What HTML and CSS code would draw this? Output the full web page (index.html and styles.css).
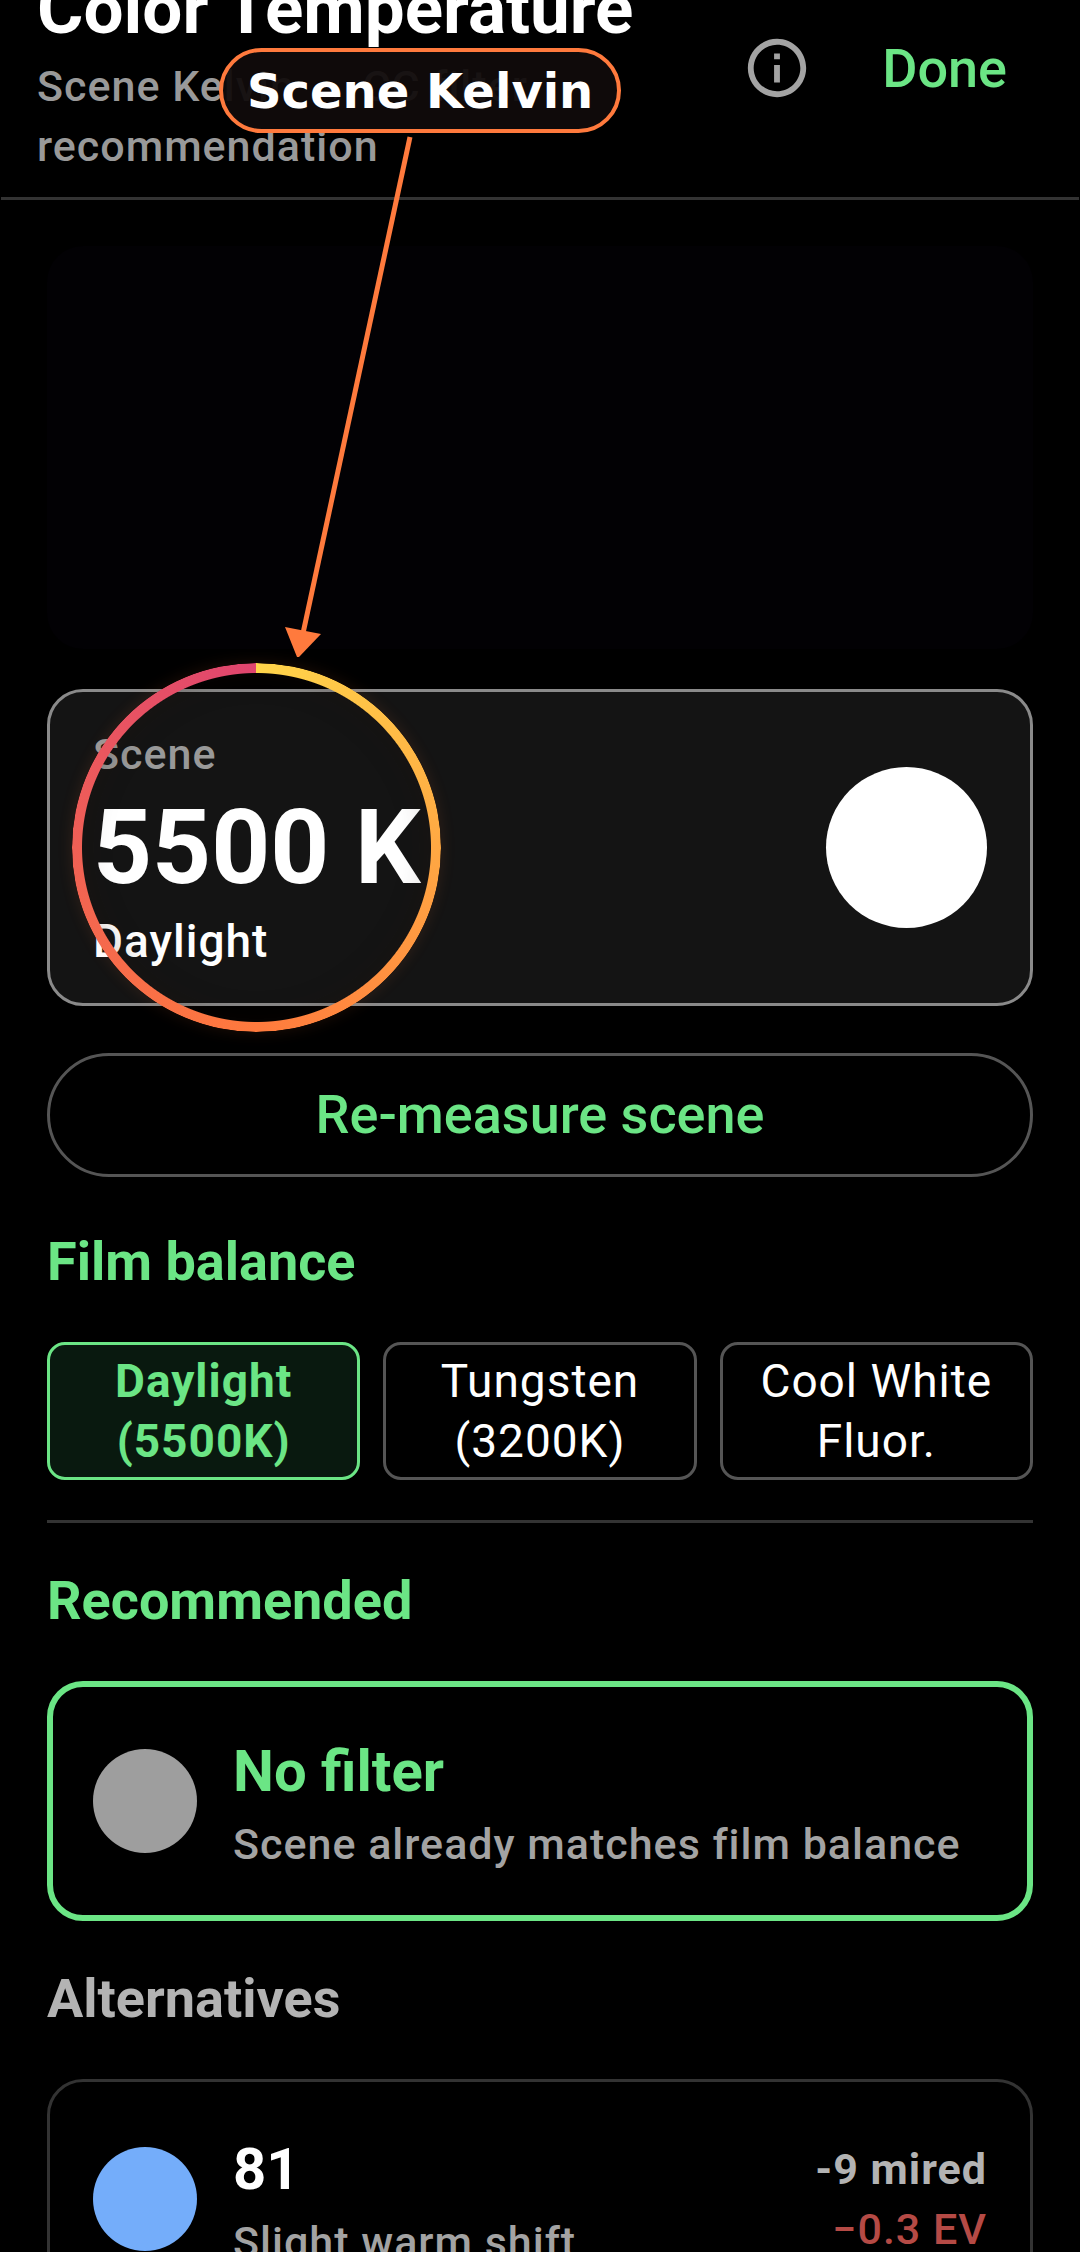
FILE: index.html
```html
<!DOCTYPE html>
<html lang="en">
<head>
<meta charset="utf-8">
<meta name="viewport" content="width=device-width, initial-scale=1">
<title>Color Temperature</title>
<link rel="stylesheet" href="styles.css">
</head>
<body>
<div class="app">
  <header class="topbar">
    <div class="topbar-text">
      <h1 class="topbar-title">Color Temperature</h1>
      <p class="topbar-sub">Scene Kelvin → CC filter recommendation</p>
    </div>
    <div class="topbar-actions">
      <button class="icon-button" type="button" aria-label="About color temperature">
        <svg class="icon" viewBox="0 0 24 24" aria-hidden="true"><path fill="currentColor" d="M11 7h2v2h-2zm0 4h2v6h-2zm1-9C6.480 2 2 6.480 2 12s4.480 10 10 10 10-4.480 10-10S17.520 2 12 2zm0 18c-4.410 0-8-3.590-8-8s3.590-8 8-8 8 3.590 8 8-3.590 8-8 8z"/></svg>
      </button>
      <button class="done" type="button">Done</button>
    </div>
  </header>

  <main class="content">
    <div class="preview"></div>

    <section class="scene">
      <div class="scene-text">
        <p class="scene-label">Scene</p>
        <p class="scene-value">5500 K</p>
        <p class="scene-name">Daylight</p>
      </div>
      <span class="swatch swatch-large"></span>
    </section>

    <button class="measure" type="button">Re-measure scene</button>

    <h2 class="heading">Film balance</h2>
    <div class="chips">
      <button class="chip chip-selected" type="button" aria-pressed="true">Daylight (5500K)</button>
      <button class="chip" type="button" aria-pressed="false">Tungsten (3200K)</button>
      <button class="chip" type="button" aria-pressed="false">Cool White Fluor.</button>
    </div>

    <hr class="divider">

    <h2 class="heading">Recommended</h2>
    <article class="filter filter-recommended">
      <span class="swatch swatch-neutral"></span>
      <div class="filter-text">
        <h3 class="filter-name">No filter</h3>
        <p class="filter-note">Scene already matches film balance</p>
      </div>
    </article>

    <h2 class="heading heading-muted">Alternatives</h2>
    <article class="filter">
      <span class="swatch swatch-blue"></span>
      <div class="filter-text">
        <h3 class="filter-name">81</h3>
        <p class="filter-note">Slight warm shift</p>
      </div>
      <div class="filter-shift">
        <p class="mired">-9 mired</p>
        <p class="ev">−0.3 EV</p>
      </div>
    </article>
  </main>

  <div class="callout">Scene Kelvin</div>
  <svg class="arrow" viewBox="0 0 140 530" aria-hidden="true">
    <path d="M130 7 L22 508" stroke="#ff7a3d" stroke-width="5" fill="none"/>
    <path d="M5 497 L41 504 L19 527 L17 527 Z" fill="#ff7a3d"/>
  </svg>
  <div class="ring-glow"></div>
  <div class="ring"></div>
</div>
</body>
</html>
```
FILE: styles.css
```css
:root {
  --green: #6be585;
  --accent: #ff7a3d;
  --muted: #a3a3a3;
  --line: #333333;
  --outline: #555555;
}

* { box-sizing: border-box; margin: 0; }

body {
  background: #000;
  color: #fff;
  font-family: Roboto, "Noto Sans", sans-serif;
}

button { font-family: inherit; cursor: pointer; }

.app {
  position: relative;
  display: flex;
  flex-direction: column;
  height: 100vh;
  overflow: hidden;
}

/* Top bar */
.topbar {
  display: flex;
  align-items: flex-start;
  justify-content: space-between;
  margin: 0 1px;
  padding: 0 72px 21px 36px;
  border-bottom: 3px solid var(--line);
}
.topbar-text { flex: 0 1 620px; margin-top: -39px; }
.topbar-title { font-size: 71px; line-height: 95px; font-weight: 700; white-space: nowrap; }
.topbar-sub {
  font-size: 43px;
  line-height: 60px;
  font-weight: 500;
  letter-spacing: 1px;
  color: #999;
}
.topbar-actions { display: flex; align-items: center; gap: 70px; height: 136px; }
.icon-button {
  display: flex;
  padding: 0;
  border: 0;
  background: none;
  color: var(--muted);
}
.icon { width: 70px; height: 70px; }
.done {
  padding: 0;
  border: 0;
  background: none;
  color: var(--green);
  font-size: 54px;
  font-weight: 500;
}

/* Scrolling content */
.content {
  flex: 1;
  min-height: 0;
  padding: 46px 47px;
  overflow-y: auto;
  scrollbar-width: none;
}
.preview { height: 403px; border-radius: 36px; background: #020104; }

.scene {
  display: flex;
  align-items: center;
  justify-content: space-between;
  margin-top: 40px;
  padding: 32px 43px;
  border: 3px solid #8a8a8a;
  border-radius: 36px;
  background: #141414;
}
.scene-label {
  font-size: 43px;
  line-height: 60px;
  font-weight: 500;
  letter-spacing: 1px;
  color: #999;
}
.scene-value { font-size: 103px; line-height: 127px; font-weight: 700; }
.scene-name { font-size: 46px; line-height: 60px; font-weight: 500; letter-spacing: 1px; }

.swatch { flex: none; width: 104px; height: 104px; border-radius: 50%; background: #fff; }
.swatch-large { width: 161px; height: 161px; }
.swatch-neutral { background: #9e9e9e; }
.swatch-blue { background: #74adfa; }

.measure {
  display: block;
  width: 100%;
  margin: 47px 0;
  padding: 0;
  border: 3px solid var(--outline);
  border-radius: 62px;
  background: none;
  color: var(--green);
  font-size: 54px;
  line-height: 118px;
  font-weight: 500;
}

.heading { margin-top: 40px; font-size: 54px; line-height: 76px; font-weight: 700; color: var(--green); }
.heading-muted { color: #b3b3b3; }

.chips { display: grid; grid-template-columns: repeat(3, 1fr); gap: 23px; margin-top: 42px; }
.chip {
  padding: 6px 30px;
  border: 3px solid var(--outline);
  border-radius: 18px;
  background: none;
  color: #fff;
  font-size: 46px;
  line-height: 60px;
  letter-spacing: 1px;
}
.chip-selected {
  border-color: var(--green);
  background: #09190f;
  color: var(--green);
  font-weight: 700;
}

.divider { height: 3px; margin: 40px 0 0; border: 0; background: var(--line); }

/* Filter cards */
.filter {
  display: flex;
  align-items: center;
  margin-top: 42px;
  padding: 44px 43px;
  border: 3px solid var(--line);
  border-radius: 36px;
}
.filter-recommended { padding: 41px 40px; border: 6px solid var(--green); }
.filter-recommended .filter-name { color: var(--green); }
.filter-text { flex: 1; margin-left: 36px; }
.filter-name { font-size: 58px; line-height: 86px; font-weight: 700; }
.filter-note {
  font-size: 43px;
  line-height: 60px;
  font-weight: 500;
  letter-spacing: 1px;
  color: var(--muted);
}
.filter-shift { text-align: right; font-size: 43px; line-height: 60px; letter-spacing: 1px; }
.mired { font-weight: 700; color: #b3b3b3; }
.ev { font-weight: 500; color: #b54a45; }

/* Annotation laid over the screen */
.callout {
  position: absolute;
  top: 48px;
  left: 219px;
  padding: 2px 24px 0;
  border: 4px solid var(--accent);
  border-radius: 43px;
  background: rgba(16, 11, 11, 0.94);
  font-family: "DejaVu Sans", sans-serif;
  font-size: 48px;
  line-height: 75px;
  font-weight: 700;
}
.arrow { position: absolute; top: 130px; left: 280px; width: 140px; height: 530px; }
.ring, .ring-glow { position: absolute; top: 663px; left: 72px; width: 369px; height: 369px; border-radius: 50%; }
.ring {
  background: conic-gradient(#ffd54a, #ffa843 25%, #ff7a3d 50%, #f06055 75%, #e0456f);
  mask: radial-gradient(closest-side, transparent 174px, #000 175px);
}
.ring-glow {
  box-shadow: 0 0 16px rgba(255, 122, 61, 0.12), inset 0 0 36px rgba(40, 20, 10, 0.4);
}
```
